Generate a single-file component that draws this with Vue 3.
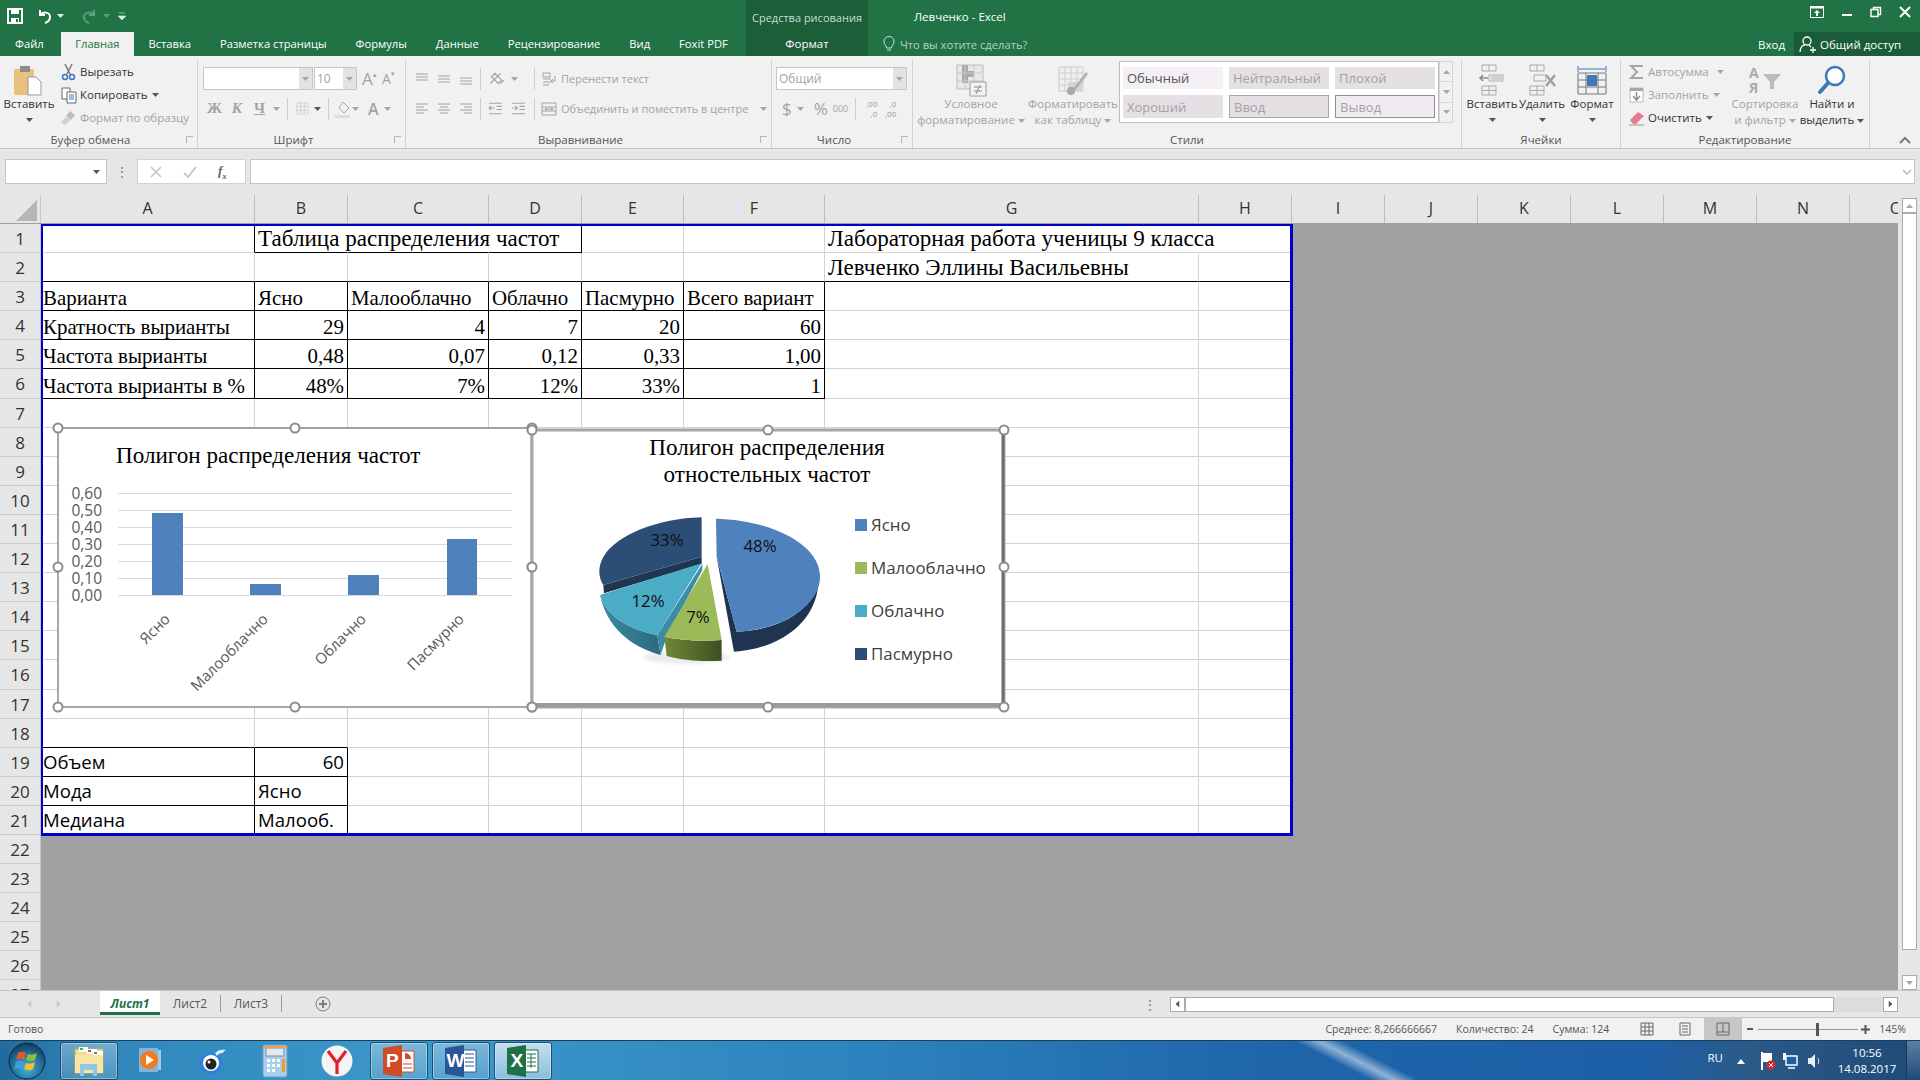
<script setup>
import { h } from "vue";

const icons = {
  alTop: "M2 3h12M2 6h12M2 9h12",
  alMid: "M2 5h12M2 8h12M2 11h12",
  alBot: "M2 7h12M2 10h12M2 13h12",
  left: "M2 3h12M2 6h8M2 9h12M2 12h8",
  center: "M2 3h12M4 6h8M2 9h12M4 12h8",
  right: "M2 3h12M6 6h8M2 9h12M6 12h8",
  outdent: "M2 3h12M9 6h5M9 9h5M2 13h12M7 7.500H2M4 5.500l-2 2 2 2",
  indent: "M2 3h12M9 6h5M9 9h5M2 13h12M2 7.500h5M5 5.500l2 2-2 2",
  orient: "M3 12 12 3M4 6l3-3 6 6-3 3zM12 12l3-3",
  wrap: "M2 2h7v4H2zM2 8h8M2 11h8M2 14h6M14 5v5h-4M12 8l-2 2 2 2",
  merge: "M1 2h14v12H1zM1 6h14M1 10h14M4 8h8M4 8l2-1M4 8l2 1M12 8l-2-1M12 8l-2 1",
  grid: "M2 2h12v12H2zM6 2v12M10 2v12M2 6h12M2 10h12",
  page: "M3 2h10v12H3zM5 5h6M5 8h6M5 11h6",
  pageBreak: "M2 2h12v12H2zM2 11h12M8 2v9",
};

const Ic = (props) =>
  h(
    "svg",
    { class: "ic", width: props.s || 16, height: props.s || 16, viewBox: "0 0 16 16" },
    [h("path", { d: icons[props.n], fill: "none", stroke: "currentColor", "stroke-width": 1 })]
  );
Ic.props = ["n", "s"];

const Caret = () =>
  h("svg", { class: "caret", width: 7, height: 4, viewBox: "0 0 7 4" }, [h("path", { d: "M0 0h7L3.500 4z", fill: "currentColor" })]);

const tabs = ["Файл", "Главная", "Вставка", "Разметка страницы", "Формулы", "Данные", "Рецензирование", "Вид", "Foxit PDF"];

const colWidths = [214, 93, 141, 93, 102, 141, 374, 93, 93, 93, 93, 93, 93, 93, 93];
const colNames = "ABCDEFGHIJKLMNO".split("");
const rowNums = Array.from({ length: 27 }, (_, i) => i + 1);

const sheet = [
  ["", "Таблица распределения частот", "", "", "", "", "Лабораторная работа ученицы 9 класса", ""],
  ["", "", "", "", "", "", "Левченко Эллины Васильевны", ""],
  ["Варианта", "Ясно", "Малооблачно", "Облачно", "Пасмурно", "Всего вариант", "", ""],
  ["Кратность вырианты", "29", "4", "7", "20", "60", "", ""],
  ["Частота вырианты", "0,48", "0,07", "0,12", "0,33", "1,00", "", ""],
  ["Частота вырианты в %", "48%", "7%", "12%", "33%", "1", "", ""],
  ["", "", "", "", "", "", "", ""],
  ["", "", "", "", "", "", "", ""],
  ["", "", "", "", "", "", "", ""],
  ["", "", "", "", "", "", "", ""],
  ["", "", "", "", "", "", "", ""],
  ["", "", "", "", "", "", "", ""],
  ["", "", "", "", "", "", "", ""],
  ["", "", "", "", "", "", "", ""],
  ["", "", "", "", "", "", "", ""],
  ["", "", "", "", "", "", "", ""],
  ["", "", "", "", "", "", "", ""],
  ["", "", "", "", "", "", "", ""],
  ["Объем", "60", "", "", "", "", "", ""],
  ["Мода", "Ясно", "", "", "", "", "", ""],
  ["Медиана", "Малооб.", "", "", "", "", "", ""],
];

const cells = [];
sheet.forEach((row, r) => {
  row.forEach((text, c) => {
    const table = r >= 2 && r <= 5 && c <= 5;
    const lower = r >= 18 && c <= 1;
    cells.push({
      key: r + "-" + c,
      text,
      num: /^[\d,%]+$/.test(text),
      sans: r >= 18,
      large: r <= 1,
      first: c === 0,
      bb: table || lower || r === 1 || (r === 0 && c >= 1 && c <= 3) || (r === 17 && c <= 1),
      br: table || lower || (r === 0 && (c === 0 || c === 3)),
      nr: r === 0 && (c === 1 || c === 2 || c === 6),
      nb: r === 20,
    });
  });
});

const yTicks = ["0,60", "0,50", "0,40", "0,30", "0,20", "0,10", "0,00"];
const bars = [
  { x: 152, w: 31, top: 513 },
  { x: 250, w: 31, top: 584 },
  { x: 348, w: 31, top: 575 },
  { x: 447, w: 30, top: 539 },
];
const cats = [
  { t: "Ясно", x: 171 },
  { t: "Малооблачно", x: 269 },
  { t: "Облачно", x: 367 },
  { t: "Пасмурно", x: 465 },
];
const legend = [
  { t: "Ясно", y: 525, c: "#4f81bd" },
  { t: "Малооблачно", y: 568, c: "#9bbb59" },
  { t: "Облачно", y: 611, c: "#4bacc6" },
  { t: "Пасмурно", y: 654, c: "#2c4d75" },
];
const handlesA = [[58, 428], [295, 428], [532, 428], [58, 567], [532, 567], [58, 707], [295, 707], [532, 707]];
const handlesB = [[532, 430], [768, 430], [1004, 430], [532, 567], [1004, 567], [532, 707], [768, 707], [1004, 707]];
</script>

<template>
  <div class="app">
    <header class="head">
      <div class="head-left">
        <div class="qat">
          <svg width="16" height="16" viewBox="0 0 16 16"><path d="M1 1h14v14H1z" fill="none" stroke="#fff" stroke-width="2"/><path d="M4 1h8v5H4zM4 10h8v5H4z" fill="#fff"/><path d="M9 11h2v3H9z" fill="#217346"/></svg>
          <svg class="undo" width="18" height="18" viewBox="0 0 18 18"><path d="M5 3v5h5M5 8c3-4 10-3 10 2 0 3-2 5-5 6" fill="none" stroke="#fff" stroke-width="2"/></svg>
          <Caret class="q-caret" />
          <svg class="redo" width="18" height="18" viewBox="0 0 18 18"><path d="M13 3v5H8M13 8C10 4 3 5 3 10c0 3 2 5 5 6" fill="none" stroke="#5d9e7c" stroke-width="2"/></svg>
          <Caret class="q-caret dim" />
          <svg class="q-more" width="8" height="8" viewBox="0 0 8 8"><path d="M1 1h6M0 4h8L4 8z" fill="#d7e8de" stroke="#d7e8de" stroke-width=".6"/></svg>
        </div>
        <nav class="tabs">
          <span v-for="t in tabs" :key="t" class="tab" :class="{ active: t === 'Главная' }">{{ t }}</span>
        </nav>
      </div>
      <div class="head-ctx">
        <span class="ctx-title">Средства рисования</span>
        <span class="ctx-tab">Формат</span>
      </div>
      <div class="head-right">
        <div class="title-row">
          <span class="doc-title">Левченко - Excel</span>
          <div class="win-btns">
            <svg width="14" height="12" viewBox="0 0 14 12"><path d="M.5.500h13v11H.5z" fill="none" stroke="#fff"/><path d="M0 0h14v2.500H0zM7 4l3 3H8v3H6V7H4z" fill="#fff"/></svg>
            <svg width="12" height="12" viewBox="0 0 12 12"><path d="M1 8h10v2H1z" fill="#fff"/></svg>
            <svg width="12" height="12" viewBox="0 0 12 12"><path d="M1 3.500h7v7H1zM3.500 3V1.500h7v7H8" fill="none" stroke="#fff" stroke-width="1.400"/></svg>
            <svg width="12" height="12" viewBox="0 0 12 12"><path d="M1 1l10 10M11 1 1 11" stroke="#fff" stroke-width="2"/></svg>
          </div>
        </div>
        <div class="tell-row">
          <svg width="12" height="16" viewBox="0 0 12 16"><path d="M3 10C1 8 1 6 1 5a5 4.500 0 0 1 10 0c0 1 0 3-2 5l-.5 2h-5zM4 14h4" fill="none" stroke="#c8dcd0"/></svg>
          <span class="tell">Что вы хотите сделать?</span>
          <span class="login">Вход</span>
          <span class="share">
            <svg width="18" height="18" viewBox="0 0 18 18"><circle cx="8" cy="6" r="4" fill="none" stroke="#fff" stroke-width="1.300"/><path d="M1 17c0-5 3-7 5-7M10 10l2 2M11 15h6M14 12v6" fill="none" stroke="#fff" stroke-width="1.300"/></svg>
            Общий доступ
          </span>
        </div>
      </div>
    </header>

    <section class="ribbon">
      <div class="rg" style="width: 198px">
        <div class="rg-body clip">
          <div class="big paste">
            <svg width="30" height="30" viewBox="0 0 30 30"><rect x="0" y="4" width="20" height="26" rx="1" fill="#e9c07c"/><rect x="6" y="1" width="10" height="6" fill="#8d8d8d"/><path d="M14 12h8l5 5v13H14z" fill="#fff" stroke="#9a9a9a"/></svg>
            <span class="dark">Вставить</span>
            <Caret class="dark" />
          </div>
          <div class="small-col">
            <div class="s-row dark"><svg width="18" height="18" viewBox="0 0 18 18"><path d="M5 1l5 10M12 1 7 11" stroke="#7a7a7a" stroke-width="1.500"/><circle cx="5" cy="14" r="2.500" fill="none" stroke="#3d78b8" stroke-width="1.500"/><circle cx="12" cy="14" r="2.500" fill="none" stroke="#3d78b8" stroke-width="1.500"/></svg>Вырезать</div>
            <div class="s-row dark"><svg width="18" height="18" viewBox="0 0 18 18"><path d="M2 2h8v11H2z" fill="#fff" stroke="#666"/><path d="M7 6h9v11H7z" fill="#fff" stroke="#666"/><path d="M9 9h5M9 11h5M9 13h5" stroke="#3d78b8"/></svg>Копировать <Caret class="after" /></div>
            <div class="s-row gray"><svg width="18" height="18" viewBox="0 0 18 18"><path d="M10 2l5 4-4 5-5-4z" fill="#bdbdbd"/><path d="M6 8l4 3-5 5-4-3z" fill="#cfcfcf"/></svg>Формат по образцу</div>
          </div>
        </div>
        <div class="rg-label lc">Буфер обмена</div>
        <i class="launcher"></i>
      </div>

      <div class="rg" style="width: 208px">
        <div class="rg-body col pad5">
          <div class="line first">
            <span class="combo font-box"><b class="drop"><Caret /></b></span>
            <span class="combo size-box">10<b class="drop"><Caret /></b></span>
            <span class="grow">A<small>▴</small></span>
            <span class="grow shrink">A<small>▾</small></span>
          </div>
          <div class="line second">
            <span class="fmt fb">Ж</span>
            <span class="fmt fi">К</span>
            <span class="fmt fu">Ч</span>
            <Caret />
            <i class="vs vs1"></i>
            <Ic n="grid" s="15" class="dotted" />
            <Caret class="darker" />
            <i class="vs vs2"></i>
            <svg width="18" height="18" viewBox="0 0 18 18"><path d="M9 2l6 6-5 5-5-5z" fill="none" stroke="#a6a6a6"/><path d="M1 15h15v3H1z" fill="#dcdcdc"/></svg>
            <Caret />
            <span class="fmt fa">A</span>
            <Caret />
          </div>
        </div>
        <div class="rg-label lc">Шрифт</div>
        <i class="launcher"></i>
      </div>

      <div class="rg" style="width: 366px">
        <div class="rg-body col pad8">
          <div class="line first al">
            <span class="al-left">
              <Ic n="alTop" /><Ic n="alMid" /><Ic n="alBot" />
              <i class="vs"></i>
              <Ic n="orient" s="18" /><Caret />
            </span>
            <i class="vs"></i>
            <Ic n="wrap" /><span class="al-text">Перенести текст</span>
          </div>
          <div class="line second al">
            <span class="al-left">
              <Ic n="left" /><Ic n="center" /><Ic n="right" />
              <i class="vs"></i>
              <Ic n="outdent" s="17" /><Ic n="indent" s="17" />
            </span>
            <i class="vs"></i>
            <Ic n="merge" /><span class="al-text">Объединить и поместить в центре</span><Caret class="merge-caret" />
          </div>
        </div>
        <div class="rg-label lc">Выравнивание</div>
        <i class="launcher"></i>
      </div>

      <div class="rg" style="width: 141px">
        <div class="rg-body col">
          <div class="line first num-first">
            <span class="combo num-box">Общий<b class="drop"><Caret /></b></span>
          </div>
          <div class="line second num-row">
            <span class="fmt cur">$</span><Caret />
            <span class="fmt pct">%</span>
            <span class="thou">000</span>
            <i class="vs"></i>
            <span class="dec">,00<br />,0</span>
            <span class="dec">,0<br />,00</span>
          </div>
        </div>
        <div class="rg-label lc">Число</div>
        <i class="launcher"></i>
      </div>

      <div class="rg" style="width: 549px">
        <div class="rg-body styles">
          <div class="big cf">
            <svg width="30" height="32" viewBox="0 0 30 32"><path d="M1 1h26v24H1z" fill="#e8e8e8" stroke="#bdbdbd"/><path d="M6 1h6v6h6v6h-6v6H6z" fill="#a9a9a9"/><path d="M1 9h26M1 17h26M9 1v24M18 1v24" stroke="#c9c9c9"/><path d="M14 18h16v14H14z" fill="#f3f3f3" stroke="#9a9a9a"/><path d="M18 23h8M18 27h8M20 30l4-9" stroke="#8a8a8a"/></svg>
            <span>Условное</span>
            <span>форматирование<Caret class="after" /></span>
          </div>
          <div class="big ft">
            <svg width="30" height="32" viewBox="0 0 30 32"><path d="M1 3h24v24H1z" fill="#eee" stroke="#ccc"/><path d="M1 9h24M1 15h24M1 21h24M7 3v24M13 3v24M19 3v24" stroke="#cfcfcf"/><path d="M10 18h14v9H10z" fill="#d4d4d4"/><path d="M14 26 28 8l2 2-14 18z" fill="#b0b0b0"/><circle cx="13" cy="27" r="4" fill="#a8a8a8"/></svg>
            <span>Форматировать</span>
            <span>как таблицу<Caret class="after" /></span>
          </div>
          <div class="gallery">
            <span class="st s-normal">Обычный</span>
            <span class="st s-muted">Нейтральный</span>
            <span class="st s-muted">Плохой</span>
            <span class="st s-muted">Хороший</span>
            <span class="st s-box">Ввод</span>
            <span class="st s-out">Вывод</span>
          </div>
          <div class="gal-scroll">
            <span><Caret class="up" /></span>
            <span><Caret /></span>
            <span class="last"><Caret /></span>
          </div>
        </div>
        <div class="rg-label">Стили</div>
      </div>

      <div class="rg" style="width: 159px">
        <div class="rg-body cells">
          <div class="big">
            <svg width="30" height="32" viewBox="0 0 30 32"><path d="M5 1h14v6H5zM12 1v6M5 22h14v9H5zM5 26.500h14M12 22v9M12 11h14v6H12z" fill="none" stroke="#aaa"/><path d="M14 11h12v6H14z" fill="#d0d0d0"/><path d="M11 14H3M6 11l-3 3 3 3" fill="none" stroke="#8a8a8a" stroke-width="1.500"/></svg>
            <span class="dark">Вставить</span>
            <Caret class="dark" />
          </div>
          <div class="big">
            <svg width="30" height="32" viewBox="0 0 30 32"><path d="M3 1h14v6H3zM10 1v6M3 22h14v9H3zM3 26.500h14M10 22v9M7 11h12v6H7z" fill="none" stroke="#aaa"/><path d="M19 11l9 11M28 11l-9 11" stroke="#a0a0a0" stroke-width="2.500"/></svg>
            <span class="dark">Удалить</span>
            <Caret class="dark" />
          </div>
          <div class="big">
            <svg width="30" height="32" viewBox="0 0 30 32"><path d="M1 2v6M29 2v6M2 5h26" fill="none" stroke="#3d78b8"/><path d="M1 9h28v21H1zM1 16h28M1 23h28M9 9v21M21 9v21" fill="none" stroke="#777"/><path d="M10 11h10v11H10z" fill="#3d78b8"/></svg>
            <span class="dark">Формат</span>
            <Caret class="dark" />
          </div>
        </div>
        <div class="rg-label">Ячейки</div>
      </div>

      <div class="rg" style="width: 249px">
        <div class="rg-body edit">
          <div class="small-col wide">
            <div class="s-row gray"><svg width="18" height="18" viewBox="0 0 18 18"><path d="M15 3H3l6 6-6 6h12" fill="none" stroke="#a6a6a6" stroke-width="2"/></svg>Автосумма <Caret class="after far" /></div>
            <div class="s-row gray"><svg width="18" height="18" viewBox="0 0 18 18"><path d="M2 2h13v14H2z" fill="#fff" stroke="#bbb"/><path d="M2 2h13v3H2z" fill="#a6a6a6"/><path d="M8.500 6v8M5 10l3.500 4 3.500-4" fill="none" stroke="#8f8f8f" stroke-width="1.500"/></svg>Заполнить<Caret class="after" /></div>
            <div class="s-row dark"><svg width="18" height="18" viewBox="0 0 18 18"><path d="M2 11l8-8 6 4-8 8H5z" fill="#e87d92"/><path d="M1 16h15" stroke="#999"/></svg>Очистить<Caret class="after" /></div>
          </div>
          <div class="big sort">
            <svg width="32" height="32" viewBox="0 0 32 32"><path d="M14 10h18l-7 8v7h-4v-7z" fill="#bbb"/><text x="0" y="14" class="az">А</text><text x="0" y="29" class="az">Я</text></svg>
            <span>Сортировка</span>
            <span>и фильтр<Caret class="after" /></span>
          </div>
          <div class="big find">
            <svg width="30" height="32" viewBox="0 0 30 32"><circle cx="18" cy="12" r="9" fill="#fff" stroke="#3d78b8" stroke-width="2.500"/><path d="M11 19 3 28" stroke="#3d78b8" stroke-width="4" stroke-linecap="round"/></svg>
            <span class="dark">Найти и</span>
            <span class="dark">выделить<Caret class="after" /></span>
          </div>
        </div>
        <div class="rg-label">Редактирование</div>
      </div>
      <svg class="collapse" width="12" height="8" viewBox="0 0 12 8"><path d="M1 7l5-5 5 5" fill="none" stroke="#7a7a7a" stroke-width="2"/></svg>
    </section>

    <section class="fbar">
      <div class="name-box"><Caret class="darker" /></div>
      <span class="fdots">⋮</span>
      <div class="fbtns">
        <svg width="12" height="12" viewBox="0 0 12 12"><path d="M1 1l10 10M11 1 1 11" stroke="#c4c4c4" stroke-width="1.600"/></svg>
        <svg width="14" height="12" viewBox="0 0 14 12"><path d="M1 7l4 4 8-10" fill="none" stroke="#c4c4c4" stroke-width="1.800"/></svg>
        <span class="fx">f<sub>x</sub></span>
      </div>
      <div class="finput"><svg width="10" height="6" viewBox="0 0 10 6"><path d="M1 1l4 4 4-4" fill="none" stroke="#b5b5b5" stroke-width="1.400"/></svg></div>
    </section>

    <section class="sheet">
      <div class="pane">
        <div class="col-heads">
          <div class="corner"><i></i></div>
          <div v-for="(w, i) in colWidths" :key="i" class="col-head" :style="{ width: w + 'px' }">{{ colNames[i] }}</div>
        </div>
        <div class="body">
          <div class="row-heads">
            <div v-for="n in rowNums" :key="n" class="row-head">{{ n }}</div>
          </div>
          <div class="canvas">
            <div class="print-area">
              <div
                v-for="c in cells"
                :key="c.key"
                class="cell"
                :class="{ num: c.num, sans: c.sans, large: c.large, first: c.first, bb: c.bb, br: c.br, nr: c.nr, nb: c.nb }"
              >
                <span>{{ c.text }}</span>
              </div>

              <div class="chart chart-a">
                <svg width="474" height="279" viewBox="58 428 474 279">
                  <rect x="58" y="428" width="474" height="279" fill="#fff" stroke="#8c8c8c" stroke-width="1.500" />
                  <path d="M532 428v279" stroke="#a6a6a6" stroke-width="3" />
                  <text x="116" y="463" class="c-title">Полигон распределения частот</text>
                  <g v-for="(t, i) in yTicks" :key="t">
                    <line x1="118" x2="512" :y1="493.5 + i * 17" :y2="493.5 + i * 17" stroke="#d9d9d9" />
                    <text x="102" :y="499 + i * 17" class="c-axis" text-anchor="end">{{ t }}</text>
                  </g>
                  <rect v-for="b in bars" :key="b.x" :x="b.x" :y="b.top" :width="b.w" :height="595 - b.top" fill="#4f81bd" />
                  <text
                    v-for="c in cats"
                    :key="c.t"
                    class="c-cat"
                    text-anchor="end"
                    :transform="`translate(${c.x} 620) rotate(-45)`"
                  >{{ c.t }}</text>
                  <g v-for="(p, i) in handlesA" :key="i"><circle :cx="p[0]" :cy="p[1]" r="4.500" fill="#fff" stroke="#8c8c8c" stroke-width="2" /></g>
                </svg>
              </div>

              <div class="chart chart-b">
                <svg width="472" height="277" viewBox="532 430 472 277">
                  <defs>
                    <linearGradient id="tealSide" x1="0" x2="1" y1="0" y2="0"><stop offset="0" stop-color="#3a8aa3" /><stop offset="1" stop-color="#2a6b80" /></linearGradient>
                    <linearGradient id="greenSide" x1="0" x2="1" y1="0" y2="0"><stop offset="0" stop-color="#6f8a3a" /><stop offset="1" stop-color="#3e4e20" /></linearGradient>
                    <filter id="soft" x="-20%" y="-20%" width="140%" height="140%"><feGaussianBlur stdDeviation="4" /></filter>
                  </defs>
                  <rect x="532" y="430" width="472" height="277" fill="#fff" stroke="#a6a6a6" stroke-width="3" />
                  <path d="M1003 430v277" stroke="#6e6e6e" stroke-width="3" />
                  <path d="M532 705h472" stroke="#9a9a9a" stroke-width="4" />
                  <text x="767" y="455" class="c-title" text-anchor="middle">Полигон распределения</text>
                  <text x="767" y="482" class="c-title" text-anchor="middle">отностельных частот</text>

                  <g transform="translate(520 420) scale(.3333)">
                    <ellipse cx="500" cy="712" rx="130" ry="20" fill="#ececec" filter="url(#soft)" />
                    <path d="M590 410 650 635C780 630 885 570 900 470L890 525C860 640 740 690 642 695Z" fill="#1f3450" />
                    <path d="M588 296C750 300 900 370 900 470 900 560 780 630 650 635L590 410Z" fill="#4f81bd" />
                    <path d="M545 410 250 495 252 520 545 432Z" fill="#1f3550" />
                    <path d="M545 292C400 295 238 360 238 455 238 470 243 485 250 495L545 410Z" fill="#2c4d75" />
                    <path d="M240 525C260 590 330 630 412 645L422 705C330 680 260 620 240 525Z" fill="url(#tealSide)" />
                    <path d="M547 432 412 645 422 705 440 650 547 450Z" fill="#3b8ca5" />
                    <path d="M545 430 240 525C260 590 330 630 412 645Z" fill="#4bacc6" />
                    <path d="M433 650 440 708C490 722 550 725 605 722L605 660C540 665 480 660 433 650Z" fill="url(#greenSide)" />
                    <path d="M563 432 605 660C540 665 480 660 433 650Z" fill="#9bbb59" />
                  </g>

                  <text x="760" y="552" class="c-pct" text-anchor="middle">48%</text>
                  <text x="667" y="546" class="c-pct" text-anchor="middle">33%</text>
                  <text x="648" y="607" class="c-pct" text-anchor="middle">12%</text>
                  <text x="698" y="623" class="c-pct" text-anchor="middle">7%</text>

                  <g v-for="l in legend" :key="l.t">
                    <rect x="855" :y="l.y - 6" width="12" height="12" :fill="l.c" />
                    <text x="871" :y="l.y + 6" class="c-leg">{{ l.t }}</text>
                  </g>
                  <g v-for="(p, i) in handlesB" :key="i"><circle :cx="p[0]" :cy="p[1]" r="4.500" fill="#fff" stroke="#8c8c8c" stroke-width="2" /></g>
                </svg>
              </div>
            </div>
          </div>
        </div>
      </div>
      <div class="vscroll">
        <span class="sb-btn"><Caret class="up" /></span>
        <span class="sb-thumb"></span>
        <span class="sb-track"></span>
        <span class="sb-btn"><Caret /></span>
      </div>
    </section>

    <section class="sheet-tabs">
      <div class="nav-arrows"><Caret class="lft dim" /><Caret class="rgt dim" /></div>
      <span class="st-tab on">Лист1</span>
      <span class="st-tab">Лист2</span>
      <span class="st-tab">Лист3</span>
      <svg class="add" width="16" height="16" viewBox="0 0 16 16"><circle cx="8" cy="8" r="7" fill="none" stroke="#7f7f7f" /><path d="M8 4v8M4 8h8" stroke="#7f7f7f" stroke-width="2" /></svg>
      <span class="tdots">⋮</span>
      <div class="hscroll">
        <span class="sb-btn"><Caret class="lft" /></span>
        <span class="sb-hthumb"></span>
        <span class="sb-htrack"></span>
        <span class="sb-btn"><Caret class="rgt" /></span>
      </div>
    </section>

    <footer class="status">
      <span class="ready">Готово</span>
      <span class="stat s1">Среднее: 8,266666667</span>
      <span class="stat s2">Количество: 24</span>
      <span class="stat s3">Сумма: 124</span>
      <span class="view v1"><Ic n="grid" /></span>
      <span class="view v2"><Ic n="page" /></span>
      <span class="view v3"><Ic n="pageBreak" /></span>
      <span class="zoom-minus"></span>
      <span class="slider"><i></i></span>
      <svg class="zoom-plus" width="9" height="9" viewBox="0 0 9 9"><path d="M4.500 0v9M0 4.500h9" stroke="#555" stroke-width="2" /></svg>
      <span class="zoom-val">145%</span>
    </footer>

    <div class="taskbar">
      <i class="streak"></i>
      <svg class="orb" width="38" height="38" viewBox="0 0 38 38">
        <defs><radialGradient id="orbFill" cx=".5" cy=".7" r=".7"><stop offset="0" stop-color="#3db7e4" /><stop offset="1" stop-color="#123a5c" /></radialGradient></defs>
        <circle cx="19" cy="19" r="18" fill="url(#orbFill)" stroke="#0c2c47" />
        <path d="M10 11c3-2 6-1 8 0l-2 7c-2-1-5-2-8 0z" fill="#e4572e" />
        <path d="M20 12c3 1 5 1 9-1l-2 7c-3 2-6 1-9 0z" fill="#8bbf3f" />
        <path d="M8 20c3-2 5-1 8 0l-2 7c-3-1-5-1-8 0z" fill="#3e9ce0" />
        <path d="M18 21c3 1 5 1 9-1l-2 7c-3 2-6 1-9 0z" fill="#f6c02c" />
      </svg>
      <div class="task-items">
        <span class="task boxed">
          <svg width="32" height="30" viewBox="0 0 32 30"><path d="M2 3h28v24H2z" fill="#f0dc94" stroke="#c7a955" /><path d="M6 1h9v5H6z" fill="#fff" /><path d="M7 2h3v2H7z" fill="#45b14a" /><path d="M14 3h10v5H14z" fill="#fff" /><path d="M15 4h3v2h-3z" fill="#d94b3f" /><path d="M20 5h10v4H20z" fill="#fff" /><path d="M21 6h3v2h-3z" fill="#3f86d4" /><path d="M2 9h28v18H2z" fill="#f7e6a6" /><path d="M7 18h17v12h-4v-6h-9v6H7z" fill="#8fc7e6" /></svg>
        </span>
        <span class="task">
          <svg width="30" height="30" viewBox="0 0 30 30"><path d="M3 2h19v24H3z" fill="#83b4d8" /><path d="M22 4h3v20h-3z" fill="#a5cbe4" /><circle cx="13" cy="14" r="9" fill="#f57a1a" /><path d="M10 9l8 5-8 5z" fill="#fff" /></svg>
        </span>
        <span class="task">
          <svg width="30" height="30" viewBox="0 0 30 30"><circle cx="13" cy="17" r="11" fill="#2f7fe0" /><circle cx="13" cy="17" r="8" fill="#fff" /><circle cx="13" cy="18" r="5.500" fill="#222" /><circle cx="11" cy="16" r="1.500" fill="#fff" /><path d="M17 7c3-3 7-4 11-3-2 1-3 2-3 3-3 0-5 1-6 3z" fill="#d9f0ff" /></svg>
        </span>
        <span class="task">
          <svg width="26" height="34" viewBox="0 0 26 34"><rect x="1" y="1" width="24" height="32" rx="2" fill="#a9d0ea" stroke="#6d9dc0" /><rect x="4" y="4" width="18" height="8" fill="#dfe9f1" stroke="#7d8fa0" /><path d="M1 2h24v2H1z" fill="#f0a24a" /><path d="M5 15h3v3H5zM10 15h3v3h-3zM15 15h3v3h-3zM5 20h3v3H5zM10 20h3v3h-3zM15 20h3v3h-3zM5 25h3v3H5zM10 25h3v3h-3z" fill="#fff" /><path d="M20 15h3v13h-3z" fill="#f29a2e" /></svg>
        </span>
        <span class="task">
          <svg width="32" height="32" viewBox="0 0 32 32"><circle cx="16" cy="16" r="15.500" fill="#f4f4f4" /><path d="M7 6l9 12 9-12M16 18v11" fill="none" stroke="#e0202a" stroke-width="3.200" /></svg>
        </span>
        <span class="task boxed">
          <svg width="32" height="32" viewBox="0 0 32 32"><path d="M14 6h17v21H14z" fill="#fff" stroke="#d24a26" /><path d="M0 3 19 0v32L0 29z" fill="#d24a26" /><path d="M22 8a6 6 0 0 1 6 6h-6z" fill="#d24a26" /><path d="M20 19h9M20 23h9" stroke="#d24a26" /><text x="3" y="22" class="app-letter">P</text></svg>
        </span>
        <span class="task boxed">
          <svg width="32" height="32" viewBox="0 0 32 32"><path d="M14 5h17v22H14z" fill="#fff" stroke="#2a5699" /><path d="M0 3 19 0v32L0 29z" fill="#2a5699" /><path d="M20 9h9M20 13h9M20 17h9M20 21h9" stroke="#2a5699" /><text x="1.500" y="22" class="app-letter">W</text></svg>
        </span>
        <span class="task boxed lit">
          <svg width="32" height="32" viewBox="0 0 32 32"><path d="M14 5h17v22H14z" fill="#fff" stroke="#1e7145" /><path d="M0 3 19 0v32L0 29z" fill="#1e7145" /><path d="M20 9h9M20 13h9M20 17h9M20 21h9M24 9v14" stroke="#1e7145" /><text x="3.500" y="22" class="app-letter">X</text></svg>
        </span>
      </div>
      <div class="tray">
        <span class="lang">RU</span>
        <svg class="t-arrow" width="8" height="6" viewBox="0 0 8 6"><path d="M0 6l4-5 4 5z" fill="#fff" /></svg>
        <svg class="t-flag" width="16" height="20" viewBox="0 0 16 20"><path d="M2 1v18" stroke="#fff" stroke-width="2" /><path d="M3 2h9v9H3z" fill="#fff" /><circle cx="11" cy="14" r="4.500" fill="#d9252b" /><path d="M9 12l4 4M13 12l-4 4" stroke="#fff" /></svg>
        <svg class="t-net" width="16" height="18" viewBox="0 0 16 18"><path d="M4 4h11v9H4zM6 16h7" fill="#1c5fa6" stroke="#fff" stroke-width="1.400" /><path d="M1 1h3v7H1z" fill="#fff" /></svg>
        <svg class="t-snd" width="14" height="16" viewBox="0 0 14 16"><path d="M1 5h3l4-4v14l-4-4H1z" fill="#e8eef5" /><path d="M11 5c1 2 1 4 0 6" fill="none" stroke="#dfe8f2" /></svg>
        <div class="clock"><span>10:56</span><span>14.08.2017</span></div>
        <i class="show-desk"></i>
      </div>
    </div>
  </div>
</template>

<style>
html, body { margin: 0; padding: 0; overflow: hidden; }
</style>

<style scoped>
.app {
  width: 1920px;
  height: 1080px;
  display: flex;
  flex-direction: column;
  overflow: hidden;
  font-family: "Open Sans", "Liberation Sans", sans-serif;
  font-size: 11.500px;
  color: #a3a3a3;
  background: #e6e6e6;
}
.ic { flex: none; }
.caret { color: #a6a6a6; flex: none; }
.caret.dark, .dark .caret, .caret.darker { color: #555; }
.caret.up { transform: rotate(180deg); }
.caret.lft { transform: rotate(90deg); color: #555; }
.caret.rgt { transform: rotate(-90deg); color: #555; }
.caret.dim { color: #c4c4c4; }
.caret.after { margin-left: 3px; vertical-align: middle; }
.dark { color: #333; }
.gray { color: #a3a3a3; }

/* title + tabs */
.head {
  height: 56px;
  flex: none;
  background: #217346;
  color: #fff;
  display: flex;
}
.head-left { width: 746px; display: flex; flex-direction: column; }
.qat { height: 32px; display: flex; align-items: center; padding-left: 7px; }
.undo { margin-left: 12px; }
.redo { margin-left: 17px; }
.q-caret { color: #e4efe8; margin-left: 4px; }
.q-caret.dim { color: #5d9e7c; }
.q-more { margin-left: 8px; }
.tabs { height: 24px; display: flex; }
.tab { padding: 0 14.500px; line-height: 24px; font-size: 11.200px; white-space: nowrap; }
.tab:first-child { padding: 0 17px 0 15px; }
.tab.active { background: #f1f1f1; color: #217346; }
.head-ctx {
  width: 122px;
  background: #1b5e38;
  display: flex;
  flex-direction: column;
  align-items: center;
}
.ctx-title { height: 32px; line-height: 35px; font-size: 11px; color: #c9ddd1; white-space: nowrap; }
.ctx-tab { line-height: 24px; font-size: 11.500px; }
.head-right { flex: 1; display: flex; flex-direction: column; }
.title-row { height: 32px; display: flex; align-items: center; padding-left: 46px; }
.doc-title { font-size: 11.500px; }
.win-btns { margin-left: auto; display: flex; align-items: center; gap: 17px; padding-right: 9px; margin-top: -8px; }
.tell-row { height: 24px; display: flex; align-items: center; padding-left: 15px; }
.tell { color: #b6d0c0; margin-left: 5px; font-size: 11.200px; }
.login { margin-left: auto; margin-right: 9px; }
.share {
  width: 126px;
  height: 24px;
  background: #1a5c37;
  display: flex;
  align-items: center;
  gap: 3px;
  padding-left: 5px;
  box-sizing: border-box;
}

/* ribbon */
.ribbon {
  height: 93px;
  flex: none;
  background: #f1f1f1;
  border-bottom: 1px solid #c6c6c6;
  box-sizing: border-box;
  display: flex;
  position: relative;
}
.rg {
  flex: none;
  box-sizing: border-box;
  margin-top: 4px;
  height: 88px;
  border-right: 1px solid #d2d2d2;
  display: flex;
  flex-direction: column;
  position: relative;
}
.rg-body { flex: 1; display: flex; min-height: 0; }
.rg-body.col { flex-direction: column; }
.rg-label { height: 16px; line-height: 16px; text-align: center; color: #555; font-size: 11.500px; flex: none; }
.rg-label.lc { padding-right: 16px; }
.launcher {
  position: absolute;
  right: 4px;
  bottom: 5px;
  width: 6px;
  height: 6px;
  border-left: 1px solid #b5b5b5;
  border-top: 1px solid #b5b5b5;
}
.big {
  display: flex;
  flex-direction: column;
  align-items: center;
  padding-top: 4px;
  line-height: 16px;
  white-space: nowrap;
  flex: none;
}
.big > svg { flex: none; }
.big > svg:first-child { margin-bottom: 0; height: 32px; overflow: visible; }
.big > .caret { margin-top: 6px; }
.paste { width: 58px; }
.small-col { padding-top: 0; display: flex; flex-direction: column; }
.s-row { height: 23px; display: flex; align-items: center; gap: 1px; white-space: nowrap; margin-left: 2px; }
.s-row svg { margin-right: 1px; flex: none; }
.pad5 { padding-left: 5px; }
.pad8 { padding-left: 8px; }
.line { display: flex; align-items: center; height: 23px; white-space: nowrap; flex: none; }
.line.first { margin-top: 7px; }
.line.second { margin-top: 7px; }
.combo {
  display: flex;
  align-items: center;
  height: 23px;
  box-sizing: border-box;
  background: #fff;
  border: 1px solid #c6c6c6;
  position: relative;
  font-size: 12px;
  padding-left: 2px;
}
.drop {
  position: absolute;
  right: 0;
  top: 0;
  bottom: 0;
  width: 13px;
  background: #e3e3e3;
  display: flex;
  align-items: center;
  justify-content: center;
}
.font-box { width: 110px; }
.size-box { width: 43px; margin-left: 1px; }
.grow { margin-left: 5px; font-size: 17px; width: 18px; }
.grow small { font-size: 7px; vertical-align: 8px; }
.grow.shrink { font-size: 14px; margin-left: 2px; }
.fmt { color: #a3a3a3; font-family: "Liberation Serif", serif; font-weight: 700; font-size: 15px; }
.fb { margin-left: 4px; }
.fi { margin-left: 10px; font-style: italic; }
.fu { margin: 0 8px 0 12px; text-decoration: underline; }
.fa { font-family: "Open Sans", sans-serif; margin: 0 5px 0 9px; font-size: 16px; font-weight: 600; }
.vs { width: 1px; height: 22px; background: #cfcfcf; flex: none; margin: 0 7px 0 9px; }
.vs1 { margin: 0 7px; }
.vs2 { margin: 0 5px 0 7px; }
.dotted { margin-right: 4px; color: #bcbcbc; }
.dotted :deep(path) { stroke-dasharray: 1 1; }
.al { gap: 6px; }
.al .vs { margin: 0; }
.al-left { display: flex; align-items: center; gap: 6px; width: 114px; flex: none; }
.al-left .vs { margin: 0; }
.al-text { margin-left: -2px; font-size: 11px; }
.merge-caret { margin-left: 6px; }
.num-first { padding-left: 4px; }
.num-box { width: 131px; }
.num-row { padding-left: 10px; gap: 5px; }
.cur { font-size: 17px; font-weight: 400; font-family: "Open Sans", sans-serif; }
.pct { font-size: 17px; font-weight: 400; font-family: "Open Sans", sans-serif; margin-left: 5px; }
.thou { font-size: 9px; }
.num-row .vs { margin: 0 2px; }
.dec { font-size: 8px; line-height: 10px; color: #999; width: 14px; text-align: right; }
.styles { padding-left: 2px; }
.cf { width: 112px; }
.ft { width: 92px; }
.gallery {
  width: 320px;
  height: 62px;
  margin-top: 1px;
  box-sizing: border-box;
  background: #fff;
  border: 1px solid #bdbdbd;
  display: grid;
  grid-template-columns: repeat(3, 100px);
  grid-template-rows: 22px 23px;
  gap: 6px;
  padding: 5px 3px;
}
.st {
  font-size: 13px;
  display: flex;
  align-items: center;
  padding-left: 4px;
  box-sizing: border-box;
  color: #a6a0a6;
  background: #e4e0e4;
}
.s-normal { background: #f4f0f6; color: #5a565a; }
.s-box { border: 1px solid #a8a8a8; }
.s-out { border: 1px solid #8e8e8e; background: #f0ecf2; }
.gal-scroll { display: flex; flex-direction: column; width: 14px; height: 62px; margin-top: 1px; }
.gal-scroll span {
  flex: 1;
  border: 1px solid #d6d6d6;
  border-bottom: 0;
  display: flex;
  align-items: center;
  justify-content: center;
}
.gal-scroll .last { border-bottom: 1px solid #d6d6d6; }
.cells { padding-left: 5px; }
.cells .big { width: 50px; }
.edit { padding-left: 5px; }
.small-col.wide { width: 105px; }
.s-row:has(.far) { white-space: nowrap; }
.far { margin-left: 7px !important; }
.sort { width: 68px; }
.find { width: 66px; }
.az { font: 700 14px "Open Sans", sans-serif; fill: #aaa; }
.collapse { position: absolute; right: 9px; bottom: 4px; }

/* formula bar */
.fbar {
  height: 46px;
  flex: none;
  display: flex;
  align-items: center;
  box-sizing: border-box;
  background: #e6e6e6;
  padding: 10px 5px 11px;
}
.name-box {
  width: 102px;
  height: 25px;
  box-sizing: border-box;
  background: #fff;
  border: 1px solid #c6c6c6;
  display: flex;
  align-items: center;
  justify-content: flex-end;
  padding-right: 6px;
}
.fdots { width: 30px; text-align: center; color: #888; font-size: 14px; }
.fbtns {
  width: 109px;
  height: 25px;
  box-sizing: border-box;
  background: #fff;
  border: 1px solid #d2d2d2;
  display: flex;
  align-items: center;
  gap: 21px;
  padding-left: 12px;
}
.fx { font-family: "Liberation Serif", serif; font-style: italic; font-weight: 700; color: #666; font-size: 13px; }
.fx sub { font-size: 9px; }
.finput {
  flex: 1;
  height: 25px;
  margin-left: 4px;
  box-sizing: border-box;
  background: #fff;
  border: 1px solid #c6c6c6;
  display: flex;
  align-items: center;
  justify-content: flex-end;
  padding-right: 2px;
}

/* sheet */
.sheet { flex: 1; display: flex; min-height: 0; background: #e6e6e6; }
.pane { width: 1898px; display: flex; flex-direction: column; overflow: hidden; }
.col-heads { height: 29px; display: flex; flex: none; border-bottom: 1px solid #a0a0a0; box-sizing: border-box; }
.corner { width: 41px; flex: none; box-sizing: border-box; position: relative; border-right: 1px solid #c6c6c6; }
.corner i {
  position: absolute;
  right: 3px;
  bottom: 2px;
  width: 0;
  height: 0;
  border-left: 21px solid transparent;
  border-bottom: 21px solid #b6b6b6;
}
.col-head {
  flex: none;
  box-sizing: border-box;
  text-align: center;
  line-height: 27px;
  font-size: 16px;
  color: #333;
  border-right: 1px solid #bdbdbd;
}
.body { flex: 1; display: flex; min-height: 0; overflow: hidden; }
.row-heads { width: 41px; flex: none; }
.row-head {
  height: 29.100px;
  box-sizing: border-box;
  border-bottom: 1px solid #c9c9c9;
  border-right: 1px solid #c6c6c6;
  text-align: center;
  line-height: 29px;
  font-size: 17px;
  color: #333;
}
.canvas { flex: 1; background: #a0a0a0; overflow: hidden; }
.print-area {
  width: 1251px;
  height: 611px;
  position: relative;
  background: #fff;
  display: grid;
  grid-template-columns: 214px 93px 141px 93px 102px 141px 374px 93px;
  grid-template-rows: repeat(21, 29.100px);
  outline: 3px solid #0000c8;
  outline-offset: -2px;
}
.cell {
  box-sizing: border-box;
  border-right: 1px solid #d4d4d4;
  border-bottom: 1px solid #d4d4d4;
  display: flex;
  align-items: flex-end;
  padding: 0 3px 0 3px;
  font: 20.900px/24px "Liberation Serif", serif;
  color: #000;
  white-space: nowrap;
  min-width: 0;
}
.cell.first { padding-left: 2px; }
.cell.large { font-size: 23.100px; line-height: 28px; }
.cell.num { justify-content: flex-end; }
.cell.sans { font: 18.600px/28px "Open Sans", sans-serif; }
.cell.bb { border-bottom-color: #000; }
.cell.br { border-right-color: #000; }
.cell.nr { border-right-color: transparent; }
.cell.nb { border-bottom-color: transparent; }
.chart { position: absolute; }
.chart svg { display: block; overflow: visible; }
.chart-a { left: 17px; top: 204px; }
.chart-b { left: 491px; top: 206px; }
.c-title { font: 23.100px "Liberation Serif", serif; fill: #000; }
.c-axis { font: 15.500px "Open Sans", sans-serif; fill: #595959; }
.c-cat { font: 15px "Open Sans", sans-serif; fill: #595959; }
.c-pct { font: 16.800px "Open Sans", sans-serif; fill: #111; }
.c-leg { font: 16.900px "Open Sans", sans-serif; fill: #404040; }

.vscroll {
  flex: 1;
  display: flex;
  flex-direction: column;
  align-items: center;
  padding-top: 3px;
  box-sizing: border-box;
}
.sb-btn {
  flex: none;
  width: 15px;
  height: 15px;
  box-sizing: border-box;
  background: #fff;
  border: 1px solid #ababab;
  display: flex;
  align-items: center;
  justify-content: center;
  color: #555;
}
.sb-thumb { width: 15px; height: 737px; box-sizing: border-box; flex: none; background: #fff; border: 1px solid #ababab; }
.sb-track { flex: 1; }

/* sheet tabs */
.sheet-tabs {
  height: 28px;
  flex: none;
  box-sizing: border-box;
  border-top: 1px solid #c6c6c6;
  border-bottom: 1px solid #c6c6c6;
  background: #e6e6e6;
  display: flex;
  align-items: stretch;
  color: #555;
}
.nav-arrows { width: 100px; display: flex; gap: 22px; align-items: center; padding-left: 26px; box-sizing: border-box; }
.st-tab { width: 60px; text-align: center; border-right: 1px solid #9a9a9a; margin: 4px 0 5px; line-height: 18px; font-size: 12px; }
.st-tab.on {
  margin: 0 0 2px;
  line-height: 25px;
  background: #fff;
  color: #217346;
  font-weight: 700;
  font-style: italic;
  border-right: 0;
  border-bottom: 3px solid #217346;
}
.add { align-self: center; margin-left: 33px; }
.tdots { margin-left: auto; align-self: center; color: #888; font-size: 14px; }
.hscroll { display: flex; align-items: center; margin: 0 22px 0 13px; width: 728px; flex: none; }
.sb-hthumb { width: 649px; height: 15px; box-sizing: border-box; background: #fff; border: 1px solid #ababab; }
.sb-htrack { height: 15px; flex: 1; background: #dcdcdc; }

/* status */
.status {
  height: 22px;
  flex: none;
  background: #f1f1f1;
  display: flex;
  align-items: center;
  color: #555;
  font-size: 10.500px;
  position: relative;
}
.ready { margin-left: 8px; }
.stat { white-space: nowrap; }
.s1 { margin-left: 1282px; }
.s2 { margin-left: 19px; }
.s3 { margin-left: 19px; }
.view { height: 22px; width: 38px; display: flex; align-items: center; justify-content: center; color: #666; }
.v1 { margin-left: 19px; }
.v3 { background: #c6c6c6; }
.zoom-minus { width: 6px; height: 2px; background: #555; margin-left: 5px; }
.slider { width: 100px; height: 1px; background: #9a9a9a; margin-left: 5px; position: relative; }
.slider i { position: absolute; left: 58px; top: -6px; width: 3px; height: 13px; background: #555; }
.zoom-plus { margin-left: 3px; }
.zoom-val { margin-left: 9px; }

/* taskbar */
.taskbar {
  height: 40px;
  flex: none;
  position: relative;
  overflow: hidden;
  display: flex;
  align-items: center;
  border-top: 1px solid #16405f;
  box-sizing: border-box;
  background: linear-gradient(90deg, #236a9c 0, #2f86bb 5%, #3d98ca 22%, #2d83bd 45%, #1f66ab 65%, #1d5fa6 86%, #2b5a88 91%, #1f4a78 100%);
}
.streak {
  position: absolute;
  left: 1298px;
  top: 2px;
  width: 22px;
  height: 120px;
  background: linear-gradient(90deg, transparent, rgba(255, 255, 255, 0.5), transparent);
  transform: rotate(-63deg);
  transform-origin: top left;
}
.orb { margin-left: 8px; flex: none; }
.task-items { display: flex; margin-left: 14px; gap: 4px; position: relative; }
.task {
  width: 58px;
  height: 38px;
  box-sizing: border-box;
  display: flex;
  align-items: center;
  justify-content: center;
  border: 1px solid transparent;
  border-radius: 3px;
}
.task.boxed {
  border-color: #1c4f74;
  background: linear-gradient(180deg, rgba(255, 255, 255, 0.32), rgba(255, 255, 255, 0.12));
  box-shadow: inset 0 0 0 1px rgba(255, 255, 255, 0.35);
}
.task.lit { background: linear-gradient(180deg, rgba(255, 255, 255, 0.7), rgba(255, 255, 255, 0.4)); }
.app-letter { font: 700 19px "Liberation Sans", sans-serif; fill: #fff; }
.tray {
  margin-left: auto;
  display: flex;
  align-items: center;
  color: #fff;
  position: relative;
}
.lang { font-size: 11.500px; margin-top: -6px; }
.t-arrow { margin-left: 14px; }
.t-flag { margin-left: 15px; }
.t-net { margin-left: 6px; }
.t-snd { margin-left: 9px; }
.clock {
  display: flex;
  flex-direction: column;
  align-items: center;
  width: 70px;
  margin-left: 11px;
  line-height: 16px;
  font-size: 11.500px;
}
.show-desk {
  width: 13px;
  height: 39px;
  margin-left: 4px;
  background: linear-gradient(180deg, #5c7fa3, #1f4a78);
  border-left: 1px solid #16385c;
}
</style>
